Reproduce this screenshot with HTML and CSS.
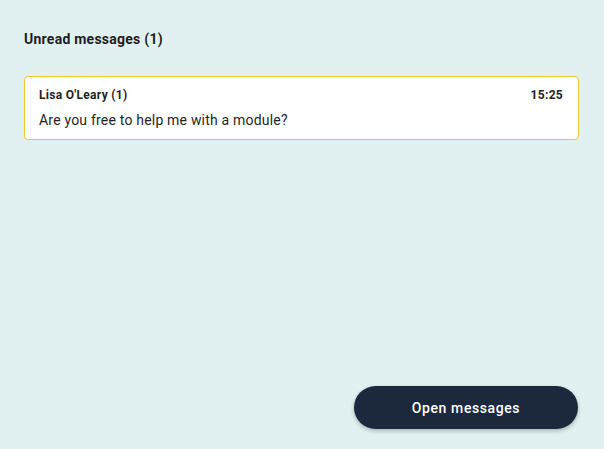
FILE: index.html
```html
<!DOCTYPE html>
<html lang="en">
<head>
  <meta charset="UTF-8" />
  <meta name="viewport" content="width=device-width, initial-scale=1.0"/>
  <title>Unread messages</title>
  <link rel="stylesheet" href="styles.css">
</head>
<body>
  <div class="panel">
    <h1 class="panel-title">Unread messages (1)</h1>

    <div class="message-card">
      <div class="message-head">
        <span class="message-from">Lisa O'Leary (1)</span>
        <span class="message-time">15:25</span>
      </div>
      <div class="message-text">Are you free to help me with a module?</div>
    </div>

    <div class="actions">
      <button class="open-btn">Open messages</button>
    </div>
  </div>
</body>
</html>
```

FILE: styles.css
```css
* { margin: 0; padding: 0; box-sizing: border-box; }

body {
  font-family: Roboto, "Liberation Sans", sans-serif;
  background: #e1f0f0;
  color: #1f1f1f;
  letter-spacing: 0.25px;
}

.panel {
  display: flex;
  flex-direction: column;
  height: 449px;
  padding: 29px 25px 20px 24px;
}

.panel-title {
  font-size: 14px;
  line-height: 20px;
  font-weight: 700;
  color: #1e1e1e;
  margin-bottom: 27px;
}

.message-card {
  background: #fff;
  border: 1px solid #f3c42b;
  border-radius: 4px;
  padding: 10px 15px 10px 14px;
}

.message-head {
  display: flex;
  justify-content: space-between;
  font-size: 12px;
  line-height: 16px;
  font-weight: 700;
  letter-spacing: 0.3px;
}

.message-text {
  margin-top: 8px;
  font-size: 14px;
  line-height: 18px;
  letter-spacing: 0.2px;
}

.actions {
  margin-top: auto;
  display: flex;
  justify-content: flex-end;
  padding-right: 1px;
}

.open-btn {
  width: 224px;
  height: 43px;
  border: none;
  border-radius: 22px;
  background: #1c293c;
  color: #fff;
  font-family: inherit;
  font-size: 14px;
  font-weight: 500;
  letter-spacing: 0.6px;
  box-shadow: 0 2px 4px rgba(0, 0, 0, 0.25);
  cursor: pointer;
}
```
